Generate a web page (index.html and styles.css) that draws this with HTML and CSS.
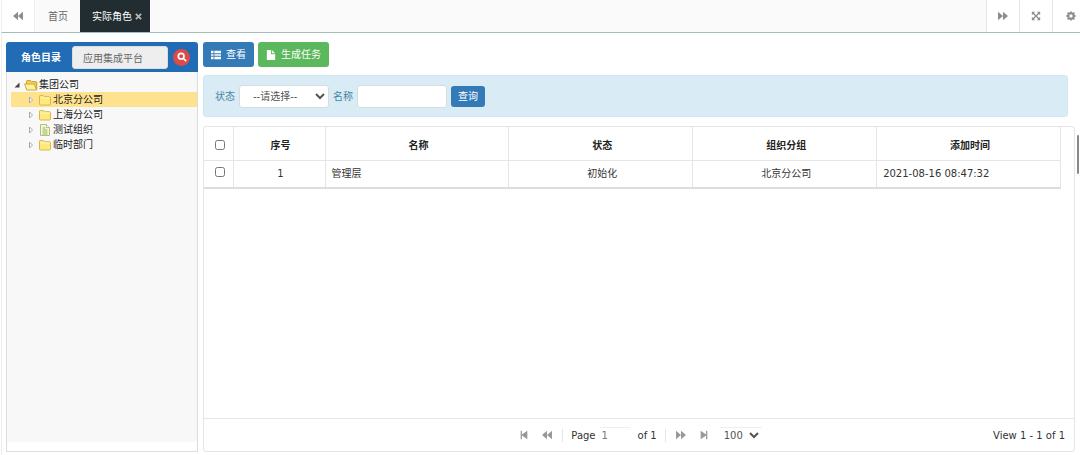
FILE: index.html
```html
<!DOCTYPE html>
<html lang="zh-CN">
<head>
    <meta charset="UTF-8">
    <meta name="viewport" content="width=device-width, initial-scale=1.0">
    <title>实际角色</title>
    <link rel="stylesheet" href="styles.css">
</head>
<body>
    <svg class="sprite" aria-hidden="true">
        <symbol id="backward" viewBox="0 0 12 12"><path d="M6 1v10L0 6zM12 1v10L6 6z"/></symbol>
        <symbol id="forward" viewBox="0 0 12 12"><path d="M0 1v10l6-5zM6 1v10l6-5z"/></symbol>
        <symbol id="first" viewBox="0 0 12 12"><path d="M2 1h1.5v4.4L10 1v10L3.500 6.600V11H2z"/></symbol>
        <symbol id="last" viewBox="0 0 12 12"><path d="M10 1H8.500v4.400L2 1v10l6.500-4.400V11H10z"/></symbol>
        <symbol id="folder" viewBox="0 0 14 12">
            <path d="M1.500 10V2.200Q1.500 1.500 2.200 1.500h3l1 1.200h5.300q1 0 1 1V10q0 1-1 1h-9q-1 0-1-1z" fill="#ffe97e" stroke="#d9b84a"/>
            <path d="M2.500 4h9" stroke="#fff6c2"/>
        </symbol>
        <symbol id="folder-open" viewBox="0 0 14 12">
            <path d="M2.500 10.500v-8q0-1 1-1h3l1 1.200H12q.8 0 .8 1v6.800z" fill="#f5cf55" stroke="#c99e2b"/>
            <path d="M.6 5h9.600l2.300 6H2.800z" fill="#fff0a0" stroke="#d2a930"/>
        </symbol>
        <symbol id="page" viewBox="0 0 14 12">
            <path d="M2.500.5h6l3 3v8h-9z" fill="#f3f6d8" stroke="#b4bc80"/>
            <path d="M8.500.5v3h3" fill="#fff" stroke="#b4bc80"/>
            <path d="M4.500 4h3M4.500 6h5M4.500 8h5M4.500 10h5" stroke="#9db45c"/>
        </symbol>
    </svg>

    <header class="tabs">
        <button class="tab-tool" aria-label="向左"><svg class="icon"><use href="#backward"/></svg></button>
        <nav class="tab-list">
            <a class="tab" href="#">首页</a>
            <a class="tab active" href="#">实际角色
                <svg class="close" viewBox="0 0 8 8"><path d="M1 1l6 6M7 1L1 7" stroke="currentColor" stroke-width="2.2"/></svg>
            </a>
        </nav>
        <button class="tab-tool" aria-label="向右"><svg class="icon"><use href="#forward"/></svg></button>
        <button class="tab-tool" aria-label="全屏">
            <svg class="icon" viewBox="0 0 12 12">
                <path d="M1 1h4L1 5zM11 1v4L7 1zM1 11V7l4 4zM11 11H7l4-4z"/>
                <path d="M2 2l8 8M10 2l-8 8" stroke="currentColor" stroke-width="1.6"/>
            </svg>
        </button>
        <button class="tab-tool" aria-label="设置">
            <svg class="icon" viewBox="0 0 12 12">
                <circle cx="6" cy="6" r="3.2" fill="none" stroke="currentColor" stroke-width="2.4"/>
                <path d="M6 .5v2M6 9.500v2M.5 6h2M9.500 6h2M2 2l1.500 1.500M8.500 8.500L10 10M10 2L8.500 3.500M3.500 8.500L2 10" stroke="currentColor" stroke-width="2.2"/>
            </svg>
        </button>
    </header>

    <div class="workspace">
        <aside class="sidebar">
            <div class="sidebar-head">
                <label for="platform">角色目录</label>
                <input id="platform" type="text" value="应用集成平台">
                <button class="search" aria-label="搜索">
                    <svg viewBox="0 0 12 12"><circle cx="5" cy="5" r="3.4"/><path d="M7.500 7.500L11 11"/></svg>
                </button>
            </div>
            <div class="tree-wrap">
                <ul class="tree">
                    <li class="node root"><svg class="arrow" viewBox="0 0 8 8"><path d="M6.500 1.500v5h-5z" fill="#444"/></svg><svg class="file"><use href="#folder-open"/></svg>集团公司</li>
                    <li class="node selected"><svg class="arrow" viewBox="0 0 8 8"><path d="M2.500 1v6l3-3z"/></svg><svg class="file"><use href="#folder"/></svg>北京分公司</li>
                    <li class="node"><svg class="arrow" viewBox="0 0 8 8"><path d="M2.500 1v6l3-3z"/></svg><svg class="file"><use href="#folder"/></svg>上海分公司</li>
                    <li class="node"><svg class="arrow" viewBox="0 0 8 8"><path d="M2.500 1v6l3-3z"/></svg><svg class="file"><use href="#page"/></svg>测试组织</li>
                    <li class="node"><svg class="arrow" viewBox="0 0 8 8"><path d="M2.500 1v6l3-3z"/></svg><svg class="file"><use href="#folder"/></svg>临时部门</li>
                </ul>
            </div>
        </aside>

        <main class="content">
            <div class="toolbar">
                <button class="btn btn-primary">
                    <svg class="icon" viewBox="0 0 12 12"><path d="M0 1h3v3H0zM4 1h8v3H4zM0 5h3v2H0zM4 5h8v2H4zM0 8h3v3H0zM4 8h8v3H4z"/></svg>查看
                </button>
                <button class="btn btn-success">
                    <svg class="icon" viewBox="0 0 12 12"><path d="M1 0h5v5h5v7H1zM7 0l4 4H7z"/></svg>生成任务
                </button>
            </div>

            <form class="filter">
                <label for="status">状态</label>
                <select id="status"><option>--请选择--</option></select>
                <label for="name">名称</label>
                <input id="name" type="text">
                <button class="btn btn-primary btn-sm" type="button">查询</button>
            </form>

            <section class="grid">
                <div class="grid-body">
                    <table>
                        <colgroup>
                            <col class="col-check">
                            <col class="col-num">
                            <col><col><col><col>
                        </colgroup>
                        <thead>
                            <tr>
                                <th><input type="checkbox" aria-label="全选"></th>
                                <th>序号</th>
                                <th>名称</th>
                                <th>状态</th>
                                <th>组织分组</th>
                                <th>添加时间</th>
                            </tr>
                        </thead>
                        <tbody>
                            <tr>
                                <td><input type="checkbox" aria-label="选择"></td>
                                <td>1</td>
                                <td class="left">管理层</td>
                                <td>初始化</td>
                                <td>北京分公司</td>
                                <td class="left">2021-08-16 08:47:32</td>
                            </tr>
                        </tbody>
                    </table>
                </div>
                <footer class="pager">
                    <div class="pager-nav">
                        <button aria-label="首页"><svg class="icon"><use href="#first"/></svg></button>
                        <button aria-label="上一页"><svg class="icon"><use href="#backward"/></svg></button>
                        <span class="sep"></span>
                        <label for="page-no">Page</label>
                        <input id="page-no" type="text" value="1">
                        <span>of 1</span>
                        <span class="sep"></span>
                        <button aria-label="下一页"><svg class="icon"><use href="#forward"/></svg></button>
                        <button aria-label="末页"><svg class="icon"><use href="#last"/></svg></button>
                        <select aria-label="每页条数"><option>100</option></select>
                    </div>
                    <span class="pager-info">View 1 - 1 of 1</span>
                </footer>
            </section>
        </main>
        <span class="scroll-thumb"></span>
    </div>
</body>
</html>
```

FILE: styles.css
```css
* {
    box-sizing: border-box;
}

body {
    display: flex;
    flex-direction: column;
    height: 100vh;
    margin: 0;
    overflow: hidden;
    background: #fff;
    color: #333;
    font-family: "DejaVu Sans", "Noto Sans CJK SC", sans-serif;
    font-size: 10px;
    line-height: 15px;
}

button,
input,
select {
    margin: 0;
    padding: 0;
    font: inherit;
    color: inherit;
}

button {
    border: none;
    background: none;
    cursor: pointer;
}

.sprite {
    position: absolute;
    width: 0;
    height: 0;
}

.icon {
    width: 10px;
    height: 10px;
    fill: currentColor;
}

/* top tabs */
.tabs {
    display: flex;
    flex: none;
    height: 33px;
    margin-left: 1px;
    border-left: 1px solid #eee;
    border-bottom: 1px solid #a3bdbc;
    background: #fafafa;
}

.tab-tool {
    display: flex;
    align-items: center;
    justify-content: center;
    width: 33px;
    background: #fff;
    border-left: 1px solid #e6e6e6;
    color: #8e8e8e;
}

.tab-tool:first-child {
    border-left: none;
    border-right: 1px solid #eee;
}

.tab-tool:last-child {
    width: 28px;
    padding-left: 8px;
}

.tab-list {
    display: flex;
    flex: 1;
}

.tab {
    display: flex;
    align-items: center;
    gap: 3px;
    padding: 0 12px 0 13px;
    color: #666;
    text-decoration: none;
}

.tab.active {
    padding: 0 8px 0 12px;
    background: #222d32;
    color: #fff;
}

.close {
    width: 7px;
    height: 7px;
    color: #aeb4b7;
}

.workspace {
    position: relative;
    display: flex;
    flex: 1;
    gap: 5px;
    min-height: 0;
    margin-left: 1px;
    padding: 9px 5px 3px 4px;
    border-left: 1px solid #eee;
}

/* role tree */
.sidebar {
    display: flex;
    flex-direction: column;
    flex: none;
    width: 192px;
}

.sidebar-head {
    display: flex;
    align-items: center;
    gap: 5px;
    height: 30px;
    padding: 0 8px 0 15px;
    border-radius: 3px 3px 0 0;
    background: #226cb5;
}

.sidebar-head label {
    flex: none;
    width: 46px;
    color: #fff;
    font-weight: bold;
}

.sidebar-head input {
    flex: 1;
    min-width: 0;
    height: 23px;
    padding: 0 10px;
    border: 1px solid #ddd;
    border-radius: 3px;
    background: #eee;
    color: #666;
}

.search {
    display: flex;
    align-items: center;
    justify-content: center;
    width: 17px;
    height: 17px;
    border-radius: 50%;
    background: #db4c48;
}

.search svg {
    width: 10px;
    height: 10px;
    fill: none;
    stroke: #fff;
    stroke-width: 2;
}

.tree-wrap {
    flex: 1;
    padding-bottom: 9px;
    border: 1px solid #ddd;
    border-top: none;
}

.tree {
    height: 100%;
    margin: 0;
    padding: 5px 0 0 4px;
    background: #f8f8f8;
    list-style: none;
}

.node {
    display: flex;
    align-items: center;
    height: 15px;
    padding-left: 16px;
    color: #222;
}

.node.root {
    padding-left: 2px;
}

.node.selected {
    background: #ffe28d;
}

.arrow {
    width: 8px;
    height: 8px;
    margin-right: 3px;
    fill: #fff;
    stroke: #aaa;
}

.root .arrow {
    stroke: none;
}

.file {
    width: 14px;
    height: 12px;
    margin-right: 1px;
    fill: none;
}

/* main area */
.content {
    display: flex;
    flex-direction: column;
    flex: 1;
    min-width: 0;
}

.toolbar {
    display: flex;
    gap: 4px;
}

.btn {
    display: flex;
    align-items: center;
    gap: 5px;
    height: 25px;
    padding: 0 8px;
    border-radius: 3px;
    color: #fff;
}

.btn-primary {
    background: #337ab7;
}

.btn-success {
    background: #5cb85c;
}

.btn-sm {
    height: 21px;
    padding: 0 7px;
}

.filter {
    display: flex;
    align-items: center;
    gap: 4px;
    height: 42px;
    margin: 8px 7px 9px 0;
    padding: 0 11px;
    border: 1px solid #cfe8f0;
    border-radius: 3px;
    background: #d9ebf4;
    color: #4685a3;
}

.filter select,
.filter input {
    width: 90px;
    height: 23px;
    border: 1px solid #d5dde0;
    border-radius: 3px;
    background: #fff;
    color: #555;
}

.filter select {
    padding: 0 0 0 9px;
}

.filter input {
    padding: 0 8px;
}

.grid {
    display: flex;
    flex-direction: column;
    flex: 1;
    border: 1px solid #e5e5e5;
    border-radius: 3px;
}

.grid-body {
    flex: 1;
    padding-right: 13px;
}

table {
    width: 100%;
    table-layout: fixed;
    border-collapse: collapse;
    border-bottom: 2px solid #ddd;
}

.col-check {
    width: 29px;
}

.col-num {
    width: 92px;
}

th,
td {
    height: 28px;
    padding: 0 6px;
    border-right: 1px solid #e5e5e5;
    text-align: center;
}

th {
    height: 33px;
    padding-top: 4px;
    border-bottom: 1px solid #e5e5e5;
    color: #222;
}

th,
td:not(.left) {
    padding-left: 9px;
}

td.left {
    text-align: left;
}

input[type="checkbox"] {
    display: block;
    width: 10px;
    height: 10px;
    margin: 0 auto;
}

td input[type="checkbox"] {
    margin-bottom: 4px;
}

.pager {
    display: grid;
    grid-template-columns: 1fr auto 1fr;
    align-items: center;
    height: 33px;
    padding: 0 9px;
    border-top: 1px solid #e5e5e5;
}

.pager-nav {
    display: flex;
    grid-column: 2;
    align-items: center;
    gap: 8px;
}

.pager button {
    display: flex;
    width: 15px;
    justify-content: center;
    color: #999;
}

.sep {
    width: 1px;
    height: 13px;
    background: #e5e5e5;
}

.pager input {
    width: 30px;
    height: 17px;
    margin-left: -4px;
    padding: 0 2px;
    border: none;
    border-top: 1px solid #eee;
    color: #777;
}

.pager select {
    width: 42px;
    height: 17px;
    border: none;
    border-top: 1px solid #eee;
    background: #fff;
    color: #555;
}

.pager-info {
    text-align: right;
}

.scroll-thumb {
    position: absolute;
    top: 102px;
    right: 1px;
    width: 2px;
    height: 39px;
    border-radius: 1px;
    background: #888;
}
```
